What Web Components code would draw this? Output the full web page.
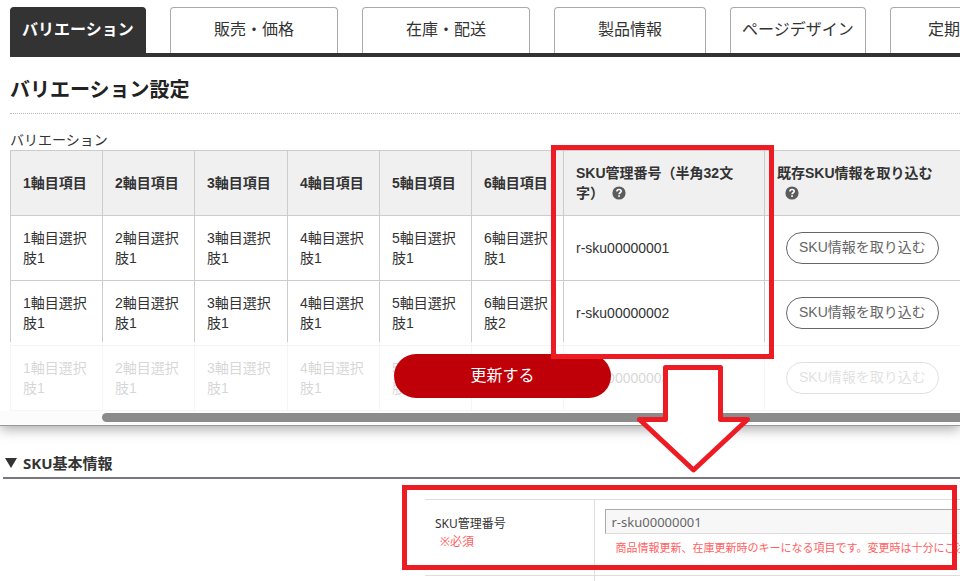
<!DOCTYPE html>
<html lang="ja">
<head>
<meta charset="utf-8">
<title>バリエーション設定</title>
<style>
  body{margin:0;background:#fff;color:#333;overflow:hidden;
    font-family:"Liberation Sans","Noto Sans CJK JP",sans-serif;font-size:14px;line-height:20px;}
</style>
</head>
<body>
<item-page></item-page>

<script>
class TabItem extends HTMLElement {
    constructor() {
        super();
        this.attachShadow({ mode: 'open' });
    }

    connectedCallback() {
        this.shadowRoot.innerHTML = `
      <style>
        :host{display:block;flex:none;}
        a{display:block;box-sizing:border-box;height:46px;padding:0 43px;line-height:44px;font-size:16px;
          color:#333;text-decoration:none;white-space:nowrap;
          border:1px solid #aaa;border-bottom:0;border-radius:4px 4px 0 0;}
        :host([compact]) a{min-width:136px;padding:0 11px;}
        :host([long]) a{padding:0 64px 0 37px;}
        :host([active]) a{background:#333;border-color:#333;color:#fff;font-weight:700;}
      </style>
      <a href="#"><slot></slot></a>
    `;
    }
}

class TabBar extends HTMLElement {
    constructor() {
        super();
        this.attachShadow({ mode: 'open' });
    }

    connectedCallback() {
        this.shadowRoot.innerHTML = `
      <style>
        :host{display:block;border-bottom:4px solid #333;}
        nav{display:flex;gap:24px;overflow:hidden;}
      </style>
      <nav><slot></slot></nav>
    `;
    }
}

class HelpIcon extends HTMLElement {
    constructor() {
        super();
        this.attachShadow({ mode: 'open' });
    }

    connectedCallback() {
        this.shadowRoot.innerHTML = `
      <style>
        :host{display:inline-block;margin-left:8px;vertical-align:top;}
        svg{display:block;margin-top:3px;}
      </style>
      <svg width="14" height="14" viewBox="0 0 14 14" fill="none">
        <circle cx="7" cy="7" r="6.6" fill="#5c5c5c"/>
        <path d="M4.9 5.5C4.9 4.2 5.8 3.5 7 3.5s2.2.7 2.2 1.8c0 1.4-2.1 1.5-2.1 3" stroke="#fff" stroke-width="1.6"/>
        <rect x="6.2" y="9.3" width="1.7" height="1.6" fill="#fff"/>
      </svg>
    `;
    }
}

class PillButton extends HTMLElement {
    constructor() {
        super();
        this.attachShadow({ mode: 'open' });
    }

    connectedCallback() {
        this.shadowRoot.innerHTML = `
      <style>
        :host{display:inline-block;vertical-align:middle;}
        button{display:block;box-sizing:border-box;height:32px;padding:0 12px 2px;font:inherit;
          color:#666;background:#fff;border:1px solid #666;border-radius:16px;white-space:nowrap;}
        :host([primary]) button{width:217px;height:44px;padding:0;font-size:16px;
          color:#fff;background:#bf0008;border:0;border-radius:22px;}
      </style>
      <button type="button"><slot></slot></button>
    `;
    }
}

class VariationTable extends HTMLElement {
    constructor() {
        super();
        this.attachShadow({ mode: 'open' });
    }

    connectedCallback() {
        const widths = [92, 92, 93, 92, 92, 92];
        const rows = [
            { options: [1, 1, 1, 1, 1, 1], sku: 'r-sku00000001' },
            { options: [1, 1, 1, 1, 1, 2], sku: 'r-sku00000002' },
            { options: [1, 1, 1, 1, 1], sku: 'r-sku00000003' },
        ];
        const optionCell = (row, i) => row.options[i] ? `${i + 1}軸目選択肢${row.options[i]}` : '';

        this.shadowRoot.innerHTML = `
      <style>
        :host{display:block;overflow:hidden;}
        table{table-layout:fixed;width:960px;border-collapse:collapse;}
        col.sku{width:201px;}
        th,td{border:1px solid #ccc;padding:12px;text-align:left;vertical-align:middle;}
        th{background:#f0f0f0;}
        th.wide{padding-right:30px;}
        td.action{padding-left:21px;}
      </style>
      <table>
        <colgroup>${widths.map(w => `<col style="width:${w}px">`).join('')}<col class="sku"><col></colgroup>
        <thead>
          <tr>
            ${widths.map((w, i) => `<th>${i + 1}軸目項目</th>`).join('')}
            <th class="wide">SKU管理番号（半角32文字）<help-icon></help-icon></th>
            <th class="wide">既存SKU情報を取り込む<help-icon></help-icon></th>
          </tr>
        </thead>
        <tbody>
          ${rows.map(row => `<tr>
            ${widths.map((w, i) => `<td>${optionCell(row, i)}</td>`).join('')}
            <td>${row.sku}</td>
            <td class="action"><pill-button>SKU情報を取り込む</pill-button></td>
          </tr>`).join('')}
        </tbody>
      </table>
    `;
    }
}

class VariationPanel extends HTMLElement {
    constructor() {
        super();
        this.attachShadow({ mode: 'open' });
    }

    connectedCallback() {
        this.shadowRoot.innerHTML = `
      <style>
        :host{display:block;position:relative;padding-top:7px;border-bottom:1px solid #999;
          box-shadow:0 3px 12px rgba(0,0,0,.35);background:#fff;}
        .content{padding-left:10px;}
        h1{margin:18px 0 16px;padding-bottom:8px;border-bottom:1px dotted #bbb;
          font-size:20px;line-height:30px;color:#222;}
        .scroll{display:flex;box-sizing:border-box;height:14px;padding:2px 0 3px 102px;background:#fcfcfc;}
        .thumb{flex:1;border-radius:5px 0 0 5px;background:#8b8b8b;}
        /* update bar floats over the last rows */
        .bar{position:absolute;left:0;right:0;bottom:14px;box-sizing:border-box;height:69px;
          padding:12px 0 0 45px;text-align:center;background:rgba(255,255,255,.8);}
      </style>
      <div class="content">
        <tab-bar>
          <tab-item active compact>バリエーション</tab-item>
          <tab-item>販売・価格</tab-item>
          <tab-item>在庫・配送</tab-item>
          <tab-item>製品情報</tab-item>
          <tab-item compact>ページデザイン</tab-item>
          <tab-item long>定期</tab-item>
        </tab-bar>
        <h1>バリエーション設定</h1>
        <div>バリエーション</div>
        <variation-table></variation-table>
      </div>
      <div class="scroll"><div class="thumb"></div></div>
      <div class="bar"><pill-button primary>更新する</pill-button></div>
    `;
    }
}

class SkuInfo extends HTMLElement {
    constructor() {
        super();
        this.attachShadow({ mode: 'open' });
    }

    connectedCallback() {
        this.shadowRoot.innerHTML = `
      <style>
        :host{display:block;padding:27px 0 0 3px;overflow:hidden;
          font-family:"Noto Sans","Noto Sans CJK JP",sans-serif;font-size:12px;line-height:18px;}
        h2{display:flex;align-items:center;gap:6px;margin:0;padding-bottom:4px;border-bottom:2px solid #77777d;
          font-size:15px;line-height:20px;}
        h2 svg{display:block;margin-left:2px;}
        .form{padding:20px 0 0 422px;}
        table{table-layout:fixed;width:calc(100% + 24px);border-collapse:collapse;}
        th,td{box-sizing:border-box;border-top:1px solid #ddd;vertical-align:top;text-align:left;font-weight:400;}
        tr{height:76px;}
        th{width:169px;padding:15px 10px 0;border-right:1px solid #ddd;}
        td{padding:9px 0 0 10px;}
        label{display:block;}
        .required{padding-left:5px;color:#ff5f5f;}
        input{display:block;box-sizing:border-box;width:100%;height:25px;padding:0 6px;border:1px solid;
          border-color:#aaa #ddd #ddd #aaa;background:#f7f7f7;color:#666;font:inherit;font-size:13px;}
        .note{padding:5px 0 0 11px;color:#ff5f5f;font-size:11px;white-space:nowrap;}
      </style>
      <h2>
        <svg width="12" height="12" viewBox="0 0 12 12"><path d="M0 1h12L6 11z" fill="#333"/></svg>
        <span>SKU基本情報</span>
      </h2>
      <div class="form">
        <table>
          <tr>
            <th><label for="sku">SKU管理番号</label><div class="required">※必須</div></th>
            <td>
              <input id="sku" type="text" value="r-sku00000001" readonly>
              <div class="note">商品情報更新、在庫更新時のキーになる項目です。変更時は十分にご注</div>
            </td>
          </tr>
          <tr><th></th><td></td></tr>
        </table>
      </div>
    `;
    }
}

class CalloutLayer extends HTMLElement {
    constructor() {
        super();
        this.attachShadow({ mode: 'open' });
    }

    connectedCallback() {
        this.shadowRoot.innerHTML = `
      <style>
        :host{position:absolute;left:0;top:0;pointer-events:none;}
        div,svg{position:absolute;box-sizing:border-box;}
        div{border:5px solid #ed1c24;}
        .column{left:551px;top:145px;width:223px;height:214px;}
        .field{left:402px;top:485px;width:555px;height:85px;}
        svg{left:636px;top:364px;}
      </style>
      <div class="column"></div>
      <div class="field"></div>
      <svg width="116" height="112" viewBox="0 0 116 112">
        <path d="M29.5 3.5h55v52h27L57.5 106 3.5 55.5h26z" fill="#fff" stroke="#ed1c24" stroke-width="5" stroke-linejoin="round"/>
      </svg>
    `;
    }
}

class ItemPage extends HTMLElement {
    constructor() {
        super();
        this.attachShadow({ mode: 'open' });
    }

    connectedCallback() {
        this.shadowRoot.innerHTML = `
      <style>
        :host{display:block;position:relative;height:100vh;overflow:hidden;}
      </style>
      <variation-panel></variation-panel>
      <sku-info></sku-info>
      <callout-layer></callout-layer>
    `;
    }
}

customElements.define('tab-item', TabItem);
customElements.define('tab-bar', TabBar);
customElements.define('help-icon', HelpIcon);
customElements.define('pill-button', PillButton);
customElements.define('variation-table', VariationTable);
customElements.define('variation-panel', VariationPanel);
customElements.define('sku-info', SkuInfo);
customElements.define('callout-layer', CalloutLayer);
customElements.define('item-page', ItemPage);
</script>
</body>
</html>
